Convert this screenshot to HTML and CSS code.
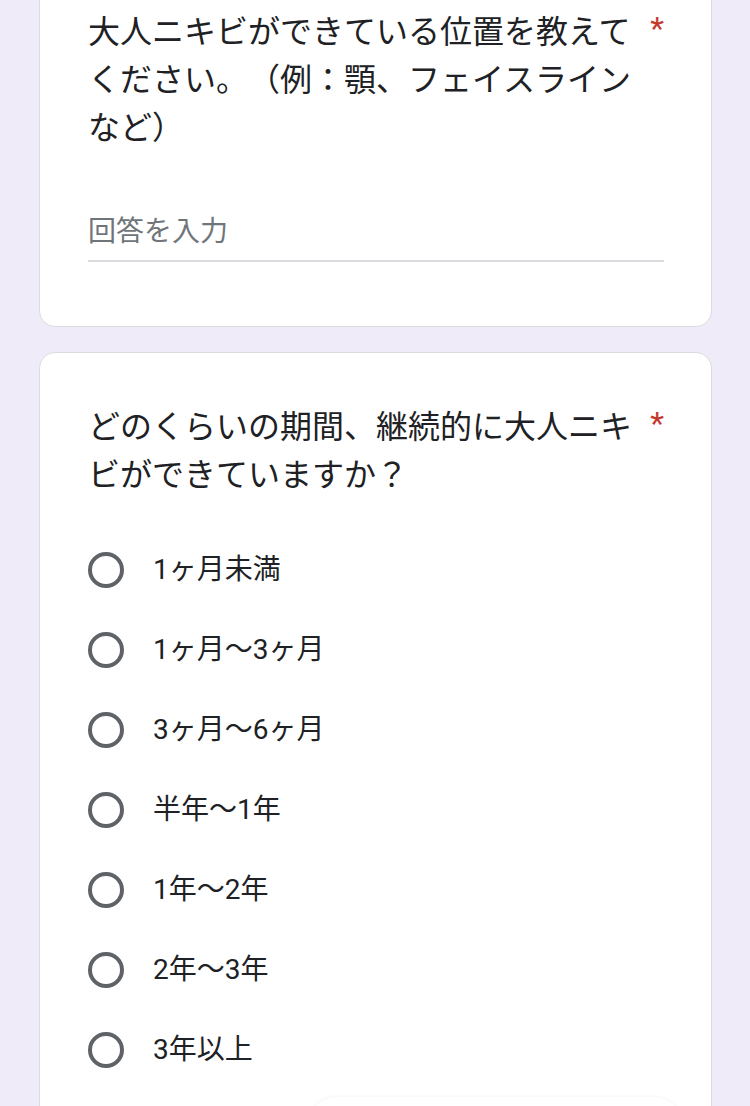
FILE: index.html
```html
<!DOCTYPE html>
<html lang="ja">
<head>
<meta charset="utf-8">
<title>フォーム</title>
<link rel="stylesheet" href="styles.css">
</head>
<body>
<main class="page">
  <section class="card card-first">
    <div class="question">
      <div class="q-text">大人ニキビができている位置を教えてください。（例：顎、フェイスラインなど）</div>
      <span class="required">*</span>
    </div>
    <div class="answer">
      <div class="answer-input">回答を入力</div>
    </div>
  </section>

  <section class="card card-second">
    <div class="question">
      <div class="q-text">どのくらいの期間、継続的に大人ニキビができていますか？</div>
      <span class="required">*</span>
    </div>
    <div class="options">
      <label class="option"><span class="radio"></span><span class="opt-label">1ヶ月未満</span></label>
      <label class="option"><span class="radio"></span><span class="opt-label">1ヶ月〜3ヶ月</span></label>
      <label class="option"><span class="radio"></span><span class="opt-label">3ヶ月〜6ヶ月</span></label>
      <label class="option"><span class="radio"></span><span class="opt-label">半年〜1年</span></label>
      <label class="option"><span class="radio"></span><span class="opt-label">1年〜2年</span></label>
      <label class="option"><span class="radio"></span><span class="opt-label">2年〜3年</span></label>
      <label class="option"><span class="radio"></span><span class="opt-label">3年以上</span></label>
    </div>
  </section>
  <div class="floating-bar"></div>
</main>
</body>
</html>
```

FILE: styles.css
```css
html, body {
  margin: 0;
  padding: 0;
}

body {
  background: #f0ebf8;
  font-family: Roboto, "Noto Sans CJK JP", sans-serif;
  color: #202124;
  height: 1106px;
  overflow: hidden;
  text-spacing-trim: space-all;
}

.page {
  position: relative;
  padding: 0 38px 0 39px;
  display: flex;
  flex-direction: column;
  gap: 25px;
}

.card {
  background: #ffffff;
  border: 1px solid #dadce0;
  border-radius: 16px;
  padding: 48px 47px 64px 48px;
}

.card-first {
  margin-top: -41px;
}

.card-second {
  padding-top: 50px;
}

.question {
  display: flex;
  align-items: flex-start;
}

.q-text {
  flex: 1;
  font-size: 32px;
  line-height: 48px;
  font-weight: 400;
  color: #202124;
  text-spacing-trim: space-all;
}

.required {
  margin-left: 12px;
  font-family: Roboto, sans-serif;
  font-size: 32px;
  line-height: 40px;
  color: #c5382c;
}

.answer {
  margin-top: 60px;
}

.answer-input {
  font-size: 28px;
  line-height: 40px;
  color: #70757a;
  padding-bottom: 8px;
  border-bottom: 2px solid #dadce0;
}

.options {
  margin-top: 31px;
  display: flex;
  flex-direction: column;
}

.option {
  height: 80px;
  display: flex;
  align-items: center;
}

.radio {
  width: 36px;
  height: 36px;
  box-sizing: border-box;
  border: 4px solid #5f6368;
  border-radius: 50%;
  margin-right: 29px;
  flex: none;
}

.opt-label {
  font-size: 28px;
  line-height: 40px;
  color: #202124;
}

.floating-bar {
  position: absolute;
  top: 1097px;
  left: 307px;
  width: 376px;
  height: 60px;
  background: #ffffff;
  border-radius: 30px;
  box-shadow: 0 0 4px rgba(0, 0, 0, 0.06);
}
```
